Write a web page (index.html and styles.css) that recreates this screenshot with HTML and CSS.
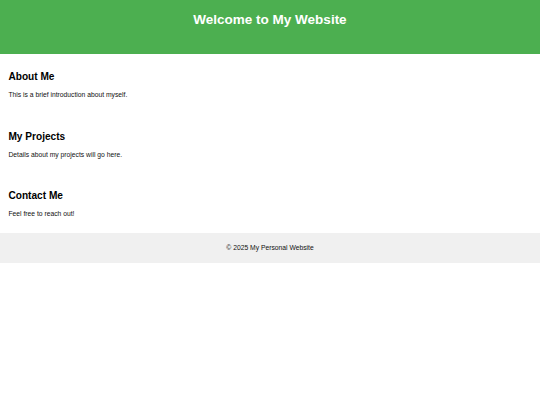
FILE: index.html
```html
<!DOCTYPE html>
<html lang="en">
<head>
<meta charset="utf-8">
<title>My Personal Website</title>
<link rel="stylesheet" href="styles.css">
</head>
<body>
<header class="site-header">
  <h1 class="site-title">Welcome to My Website</h1>
</header>
<main class="content">
  <section class="section">
    <h2 class="section-title">About Me</h2>
    <p class="section-text">This is a brief introduction about myself.</p>
  </section>
  <section class="section">
    <h2 class="section-title">My Projects</h2>
    <p class="section-text">Details about my projects will go here.</p>
  </section>
  <section class="section">
    <h2 class="section-title">Contact Me</h2>
    <p class="section-text">Feel free to reach out!</p>
  </section>
</main>
<footer class="site-footer">
  <p class="footer-text">&copy; 2025 My Personal Website</p>
</footer>
</body>
</html>
```

FILE: styles.css
```css
html, body {
  margin: 0;
  padding: 0;
  background: #ffffff;
}

body {
  font-family: "Liberation Sans", Arial, Helvetica, sans-serif;
  color: #000000;
  line-height: 1.149;
}

.site-header {
  background: #4caf50;
  color: #ffffff;
  text-align: center;
  padding: 11.8px 0 26.7px;
}

.site-title {
  margin: 0;
  font-size: 13.5px;
  font-weight: bold;
  line-height: 15.5px;
}

.content {
  margin: 0;
}

.section {
  padding: 8.44px;
}

.section-title {
  margin: 8.4px 0;
  font-size: 10.125px;
  font-weight: bold;
  line-height: 11.6px;
}

.section-text {
  margin: 6.75px 0;
  font-size: 6.75px;
  line-height: 7.76px;
  color: #111111;
}

.site-footer {
  background: #f0f0f0;
  text-align: center;
  padding: 4.2px 0;
}

.footer-text {
  margin: 6.75px 0;
  font-size: 6.75px;
  line-height: 7.76px;
  color: #111111;
}
```
